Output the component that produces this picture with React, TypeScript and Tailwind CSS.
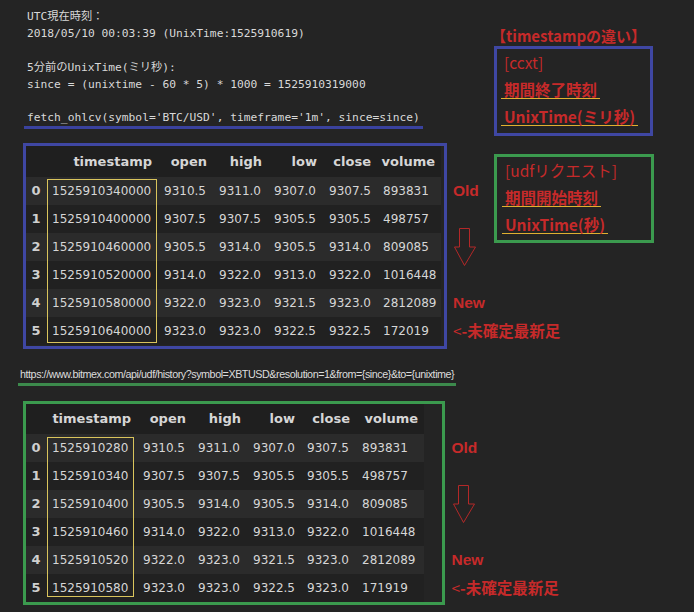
const topRows = [
  ["0", "1525910340000", "9310.5", "9311.0", "9307.0", "9307.5", "893831"],
  ["1", "1525910400000", "9307.5", "9307.5", "9305.5", "9305.5", "498757"],
  ["2", "1525910460000", "9305.5", "9314.0", "9305.5", "9314.0", "809085"],
  ["3", "1525910520000", "9314.0", "9322.0", "9313.0", "9322.0", "1016448"],
  ["4", "1525910580000", "9322.0", "9323.0", "9321.5", "9323.0", "2812089"],
  ["5", "1525910640000", "9323.0", "9323.0", "9322.5", "9322.5", "172019"],
];

const udfRows = [
  ["0", "1525910280", "9310.5", "9311.0", "9307.0", "9307.5", "893831"],
  ["1", "1525910340", "9307.5", "9307.5", "9305.5", "9305.5", "498757"],
  ["2", "1525910400", "9305.5", "9314.0", "9305.5", "9314.0", "809085"],
  ["3", "1525910460", "9314.0", "9322.0", "9313.0", "9322.0", "1016448"],
  ["4", "1525910520", "9322.0", "9323.0", "9321.5", "9323.0", "2812089"],
  ["5", "1525910580", "9323.0", "9323.0", "9322.5", "9323.0", "171919"],
];

const headers = ["", "timestamp", "open", "high", "low", "close", "volume"];

function OhlcvTable({
  rows,
  widths,
  headClass,
  highlightClass,
}: {
  rows: string[][];
  widths: number[];
  headClass: string;
  highlightClass: string;
}) {
  return (
    <div className="relative">
      <table className="table-fixed font-['DejaVu_Sans',sans-serif] text-[#d6d6d6]">
        <colgroup>
          {widths.map((w, i) => (
            <col key={i} style={{ width: w }} />
          ))}
        </colgroup>
        <thead>
          <tr className={`bg-[#1f1f1f] ${headClass}`}>
            {headers.map((h, i) => (
              <th key={i} className="pr-[6px] text-right text-[13px] font-bold">
                {h}
              </th>
            ))}
          </tr>
        </thead>
        <tbody>
          {rows.map((r, ri) => (
            <tr key={ri} className={`h-[28px] ${ri % 2 === 0 ? "bg-[#2b2b2b]" : "bg-[#212121]"}`}>
              {r.map((v, ci) =>
                ci === 0 ? (
                  <td key={ci} className="text-center text-[13px] font-bold text-[#cfcfcf]">
                    {v}
                  </td>
                ) : (
                  <td key={ci} className="whitespace-nowrap pl-[6px] text-left text-[12px]">
                    {v}
                  </td>
                )
              )}
            </tr>
          ))}
        </tbody>
      </table>
      {/* yellow highlight round the timestamp column */}
      <div className={`pointer-events-none absolute border border-[#d9c45c] ${highlightClass}`} />
    </div>
  );
}

function DownArrow() {
  return (
    <svg width="22" height="38" viewBox="0 0 22 38" className="ml-[1px]">
      <polygon
        points="5.5,0.5 15.5,0.5 15.5,19 21.5,19 10.5,37.5 0.5,19 5.5,19"
        fill="none"
        stroke="#b32828"
        strokeWidth="1"
      />
    </svg>
  );
}

function OrderLabels() {
  return (
    <div className="flex flex-col whitespace-nowrap font-bold text-[#c62a2a]">
      <div className="flex h-[28px] items-center font-['Liberation_Sans',sans-serif] text-[15.5px]">Old</div>
      <div className="flex h-[84px] items-center">
        <DownArrow />
      </div>
      <div className="flex h-[28px] items-center font-['Liberation_Sans',sans-serif] text-[15.5px]">New</div>
      <div className="flex h-[28px] items-center font-['Noto_Sans_CJK_JP',sans-serif] text-[15.5px]">
        <span className="font-normal">&lt;</span>-未確定最新足
      </div>
    </div>
  );
}

function NoteLine({ children, underline, bold = true }: { children: React.ReactNode; underline?: boolean; bold?: boolean }) {
  return (
    <div className="flex h-[27px] items-center">
      <span
        className={`inline-block px-[3px] leading-[17px] ${bold ? "font-bold" : "font-normal"} ${
          underline ? "border-b-[1.5px] border-[#e0b030]" : ""
        }`}
      >
        {children}
      </span>
    </div>
  );
}

export default function App() {
  return (
    <div className="min-h-screen w-full bg-[#242424] text-[#d8d8d8]">
      {/* top: ccxt output + notes */}
      <div className="flex items-start">
        <div className="w-[447px] shrink-0">
          <div className="pl-[24px] pt-[8px] font-['DejaVu_Sans_Mono','Noto_Sans_CJK_JP',monospace] text-[11.25px] text-[#d9d9d9]">
            <div className="h-[17px] whitespace-pre pl-[3px] leading-[17px]">UTC現在時刻：</div>
            <div className="h-[17px] whitespace-pre pl-[3px] leading-[17px]">2018/05/10 00:03:39 (UnixTime:1525910619)</div>
            <div className="h-[17px]" />
            <div className="h-[17px] whitespace-pre pl-[3px] leading-[17px]">5分前のUnixTime(ミリ秒):</div>
            <div className="h-[17px] whitespace-pre pl-[3px] leading-[17px]">since = (unixtime - 60 * 5) * 1000 = 1525910319000</div>
            <div className="h-[17px]" />
            <div className="flex">
              <span className="inline-block whitespace-pre border-b-[3px] border-[#3a429e] px-[3px] leading-[16px]">
                fetch_ohlcv(symbol='BTC/USD', timeframe='1m', since=since)
              </span>
            </div>
          </div>
          <div className="ml-[23px] mt-[14px] h-[206px] w-[424px] border-[3px] border-[#3f47a3]">
            <OhlcvTable
              rows={topRows}
              widths={[20, 112, 55, 55, 55, 54, 64]}
              headClass="h-[31px]"
              highlightClass="left-[20.5px] top-[33px] h-[164px] w-[110px]"
            />
          </div>
        </div>

        <div className="flex flex-col pt-[25.5px] font-['Noto_Sans_CJK_JP',sans-serif] text-[15.5px] text-[#c62a2a]">
          <div className="ml-[44px] whitespace-nowrap text-[15px] font-bold leading-[20px]">【timestampの違い】</div>
          <div className="ml-[47px] mt-[0.5px] w-[159px] border-[3px] border-[#3f47a3] pb-[3px] pl-[4px]">
            <NoteLine bold={false}>[ccxt]</NoteLine>
            <NoteLine underline>期間終了時刻</NoteLine>
            <NoteLine underline>UnixTime(ミリ秒)</NoteLine>
          </div>
          <div className="mt-[7px] flex items-start">
            <div className="w-[47px] shrink-0 pl-[6px] pt-[34px]">
              <OrderLabels />
            </div>
            <div className="mt-[11px] w-[160px] border-[3px] border-[#3b9a4e] pb-[2px] pl-[5px]">
              <NoteLine bold={false}>[udfリクエスト]</NoteLine>
              <NoteLine underline>期間開始時刻</NoteLine>
              <NoteLine underline>UnixTime(秒)</NoteLine>
            </div>
          </div>
        </div>
      </div>

      {/* udf request */}
      <div className="mt-[16px] flex pl-[18px]">
        <span className="inline-block whitespace-nowrap border-b-[3px] border-[#3c8a4c] px-[2px] font-['Liberation_Sans',sans-serif] text-[10.75px] leading-[18px] tracking-[-0.45px] text-[#dcdcdc]">
          https://www.bitmex.com/api/udf/history?symbol=XBTUSD&amp;resolution=1&amp;from={"{since}"}&amp;to={"{unixtime}"}
        </span>
      </div>

      <div className="mt-[15px] flex items-start">
        <div className="ml-[23px] h-[204px] w-[422px] shrink-0 border-[3px] border-[#3b9a4e]">
          <OhlcvTable
            rows={udfRows}
            widths={[20, 91, 55, 55, 54, 55, 68]}
            headClass="h-[30px]"
            highlightClass="left-[21px] top-[33px] h-[160px] w-[87px]"
          />
        </div>
        <div className="ml-[6.5px] pt-[33px]">
          <OrderLabels />
        </div>
      </div>
    </div>
  );
}
